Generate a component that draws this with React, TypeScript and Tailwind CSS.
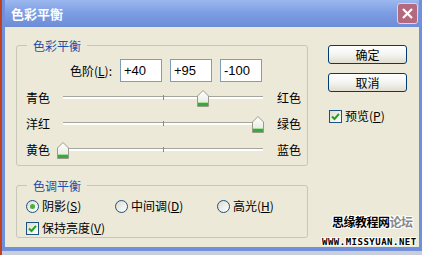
import React from 'react'

const cjk = { fontFamily: '"Noto Sans CJK SC", "Liberation Sans", sans-serif' }

function Thumb({ value }: { value: number }) {
  const left = 6 + ((value + 100) / 200) * 200 - 6
  return (
    <svg
      className="absolute top-[5px]"
      style={{ left }}
      width="12"
      height="17"
      viewBox="0 0 12 17"
    >
      <defs>
        <linearGradient id="tg" x1="0" y1="0" x2="0" y2="1">
          <stop offset="0" stopColor="#ffffff" />
          <stop offset="1" stopColor="#e4e4dc" />
        </linearGradient>
      </defs>
      <path d="M0.5 6 L6 0.5 L11.5 6 L11.5 16.5 L0.5 16.5 Z" fill="url(#tg)" stroke="#9a9a8c" />
      <rect x="1" y="13" width="10" height="3" fill="#3aa83a" />
      <rect x="1" y="12" width="10" height="1" fill="#a8dca0" />
    </svg>
  )
}

function SliderRow({ left, right, value }: { left: string; right: string; value: number }) {
  return (
    <div className="flex h-[26px] items-center">
      <span className="w-[31px] text-[12px]">{left}</span>
      <div className="relative h-[26px] w-[212px]">
        <div className="absolute left-[6px] top-[11px] h-[3px] w-[200px] border-t border-[#a6a59c] bg-white" />
        <div className="absolute left-[106px] top-[10px] h-[5px] w-px bg-[#8a8a80]" />
        <Thumb value={value} />
      </div>
      <span className="ml-[8px] text-[12px]">{right}</span>
    </div>
  )
}

function Check({ label }: { label: React.ReactNode }) {
  return (
    <div className="flex items-center gap-[3px]">
      <div className="flex h-[13px] w-[13px] items-center justify-center border border-[#1c5180] bg-gradient-to-br from-[#dcdcd4] to-white">
        <svg width="9" height="9" viewBox="0 0 9 9">
          <path d="M1 4.5 L3.5 7 L8 1.8" fill="none" stroke="#21a121" strokeWidth="2" />
        </svg>
      </div>
      <span className="text-[12px]">{label}</span>
    </div>
  )
}

function Radio({ label, on }: { label: React.ReactNode; on?: boolean }) {
  return (
    <div className="flex items-center gap-[3px]">
      <div className="flex h-[13px] w-[13px] items-center justify-center rounded-full border border-[#1c5180] bg-gradient-to-br from-[#dcdcd4] to-white">
        {on && <div className="h-[5px] w-[5px] rounded-full bg-[#4caf3c]" />}
      </div>
      <span className="text-[12px]">{label}</span>
    </div>
  )
}

function Group({ title, className, children }: { title: string; className: string; children: React.ReactNode }) {
  return (
    <div className={`relative rounded-[3px] border border-[#c8c6b4] ${className}`}>
      <span className="absolute -top-[9px] left-[10px] bg-[#ece9d8] px-[6px] text-[12px] text-[#1f4fa8]">{title}</span>
      {children}
    </div>
  )
}

function Btn({ children }: { children: React.ReactNode }) {
  return (
    <div className="flex h-[19px] w-[79px] items-center justify-center rounded-[3px] border border-[#003c74] bg-gradient-to-b from-white via-[#f4f4f0] to-[#e0ddd0] text-[12px]">
      {children}
    </div>
  )
}

const u = (s: string) => <span className="underline">{s}</span>

export default function App() {
  return (
    <div className="relative h-[255px] w-[422px] overflow-hidden border-l-2 border-[#c04020] bg-[#c8cedc] text-black" style={cjk}>
      <div className="flex h-[251px] flex-col border-x-[3px] border-b-[4px] border-[#7090dc]">
        {/* title bar */}
        <div className="flex h-[27px] items-center justify-between bg-gradient-to-b from-[#9cb8f0] via-[#7c9ce2] to-[#6c8cd8] pl-[6px] pr-[1px]">
          <span className="text-[13px] font-bold text-white">色彩平衡</span>
          <div className="flex h-[21px] w-[21px] items-center justify-center rounded-[3px] border border-[#e8d0d8] bg-[#b46a7e]">
            <svg width="13" height="13" viewBox="0 0 13 13">
              <path d="M2 2 L11 11 M11 2 L2 11" stroke="white" strokeWidth="2.2" />
            </svg>
          </div>
        </div>

        {/* client */}
        <div className="flex flex-1 bg-[#ece9d8] pl-[11px] pt-[18px]">
          <div className="flex flex-col">
            <Group title="色彩平衡" className="h-[121px] w-[292px] pl-[9px] pt-[13px]">
              <div className="flex items-center">
                <span className="w-[94px] pr-[8px] text-right text-[12px]">色阶({u('L')}):</span>
                <div className="flex gap-[8px]" style={{ fontFamily: '"Liberation Sans", sans-serif' }}>
                  {['+40', '+95', '-100'].map((v) => (
                    <div key={v} className="flex h-[23px] w-[42px] items-center border border-[#7f9db9] bg-white pl-[3px] text-[13px]">
                      {v}
                    </div>
                  ))}
                </div>
              </div>
              <div className="mt-[3px] flex flex-col">
                <SliderRow left="青色" right="红色" value={40} />
                <SliderRow left="洋红" right="绿色" value={95} />
                <SliderRow left="黄色" right="蓝色" value={-100} />
              </div>
            </Group>
            <Group title="色调平衡" className="mt-[19px] h-[53px] w-[292px] pl-[9px] pt-[11px]">
              <div className="flex">
                <div className="w-[89px]"><Radio on label={<>阴影({u('S')})</>} /></div>
                <div className="w-[102px]"><Radio label={<>中间调({u('D')})</>} /></div>
                <Radio label={<>高光({u('H')})</>} />
              </div>
              <div className="mt-[4px]">
                <Check label={<>保持亮度({u('V')})</>} />
              </div>
            </Group>
          </div>
          <div className="ml-[20px] flex flex-col gap-[9px]">
            <Btn>确定</Btn>
            <Btn>取消</Btn>
            <div className="mt-[6px] pl-[1px]">
              <Check label={<>预览({u('P')})</>} />
            </div>
          </div>
        </div>
      </div>

      {/* watermark */}
      <div className="absolute left-[330px] top-[213px] text-[12px] font-bold tracking-[-0.5px] text-black" style={{ textShadow: '1px 1px 0 #fff, -1px -1px 0 #fff, 1px -1px 0 #fff, -1px 1px 0 #fff' }}>
        思缘教程网<span className="text-[#888]">论坛</span>
      </div>
      <div
        className="absolute left-[320px] top-[236px] text-[9px] font-bold tracking-[0.5px] text-black"
        style={{ fontFamily: '"DejaVu Sans Mono", monospace', textShadow: '1px 1px 0 #fff, -1px -1px 0 #fff, 1px -1px 0 #fff, -1px 1px 0 #fff' }}
      >
        WWW.MISSYUAN.NET
      </div>
    </div>
  )
}
